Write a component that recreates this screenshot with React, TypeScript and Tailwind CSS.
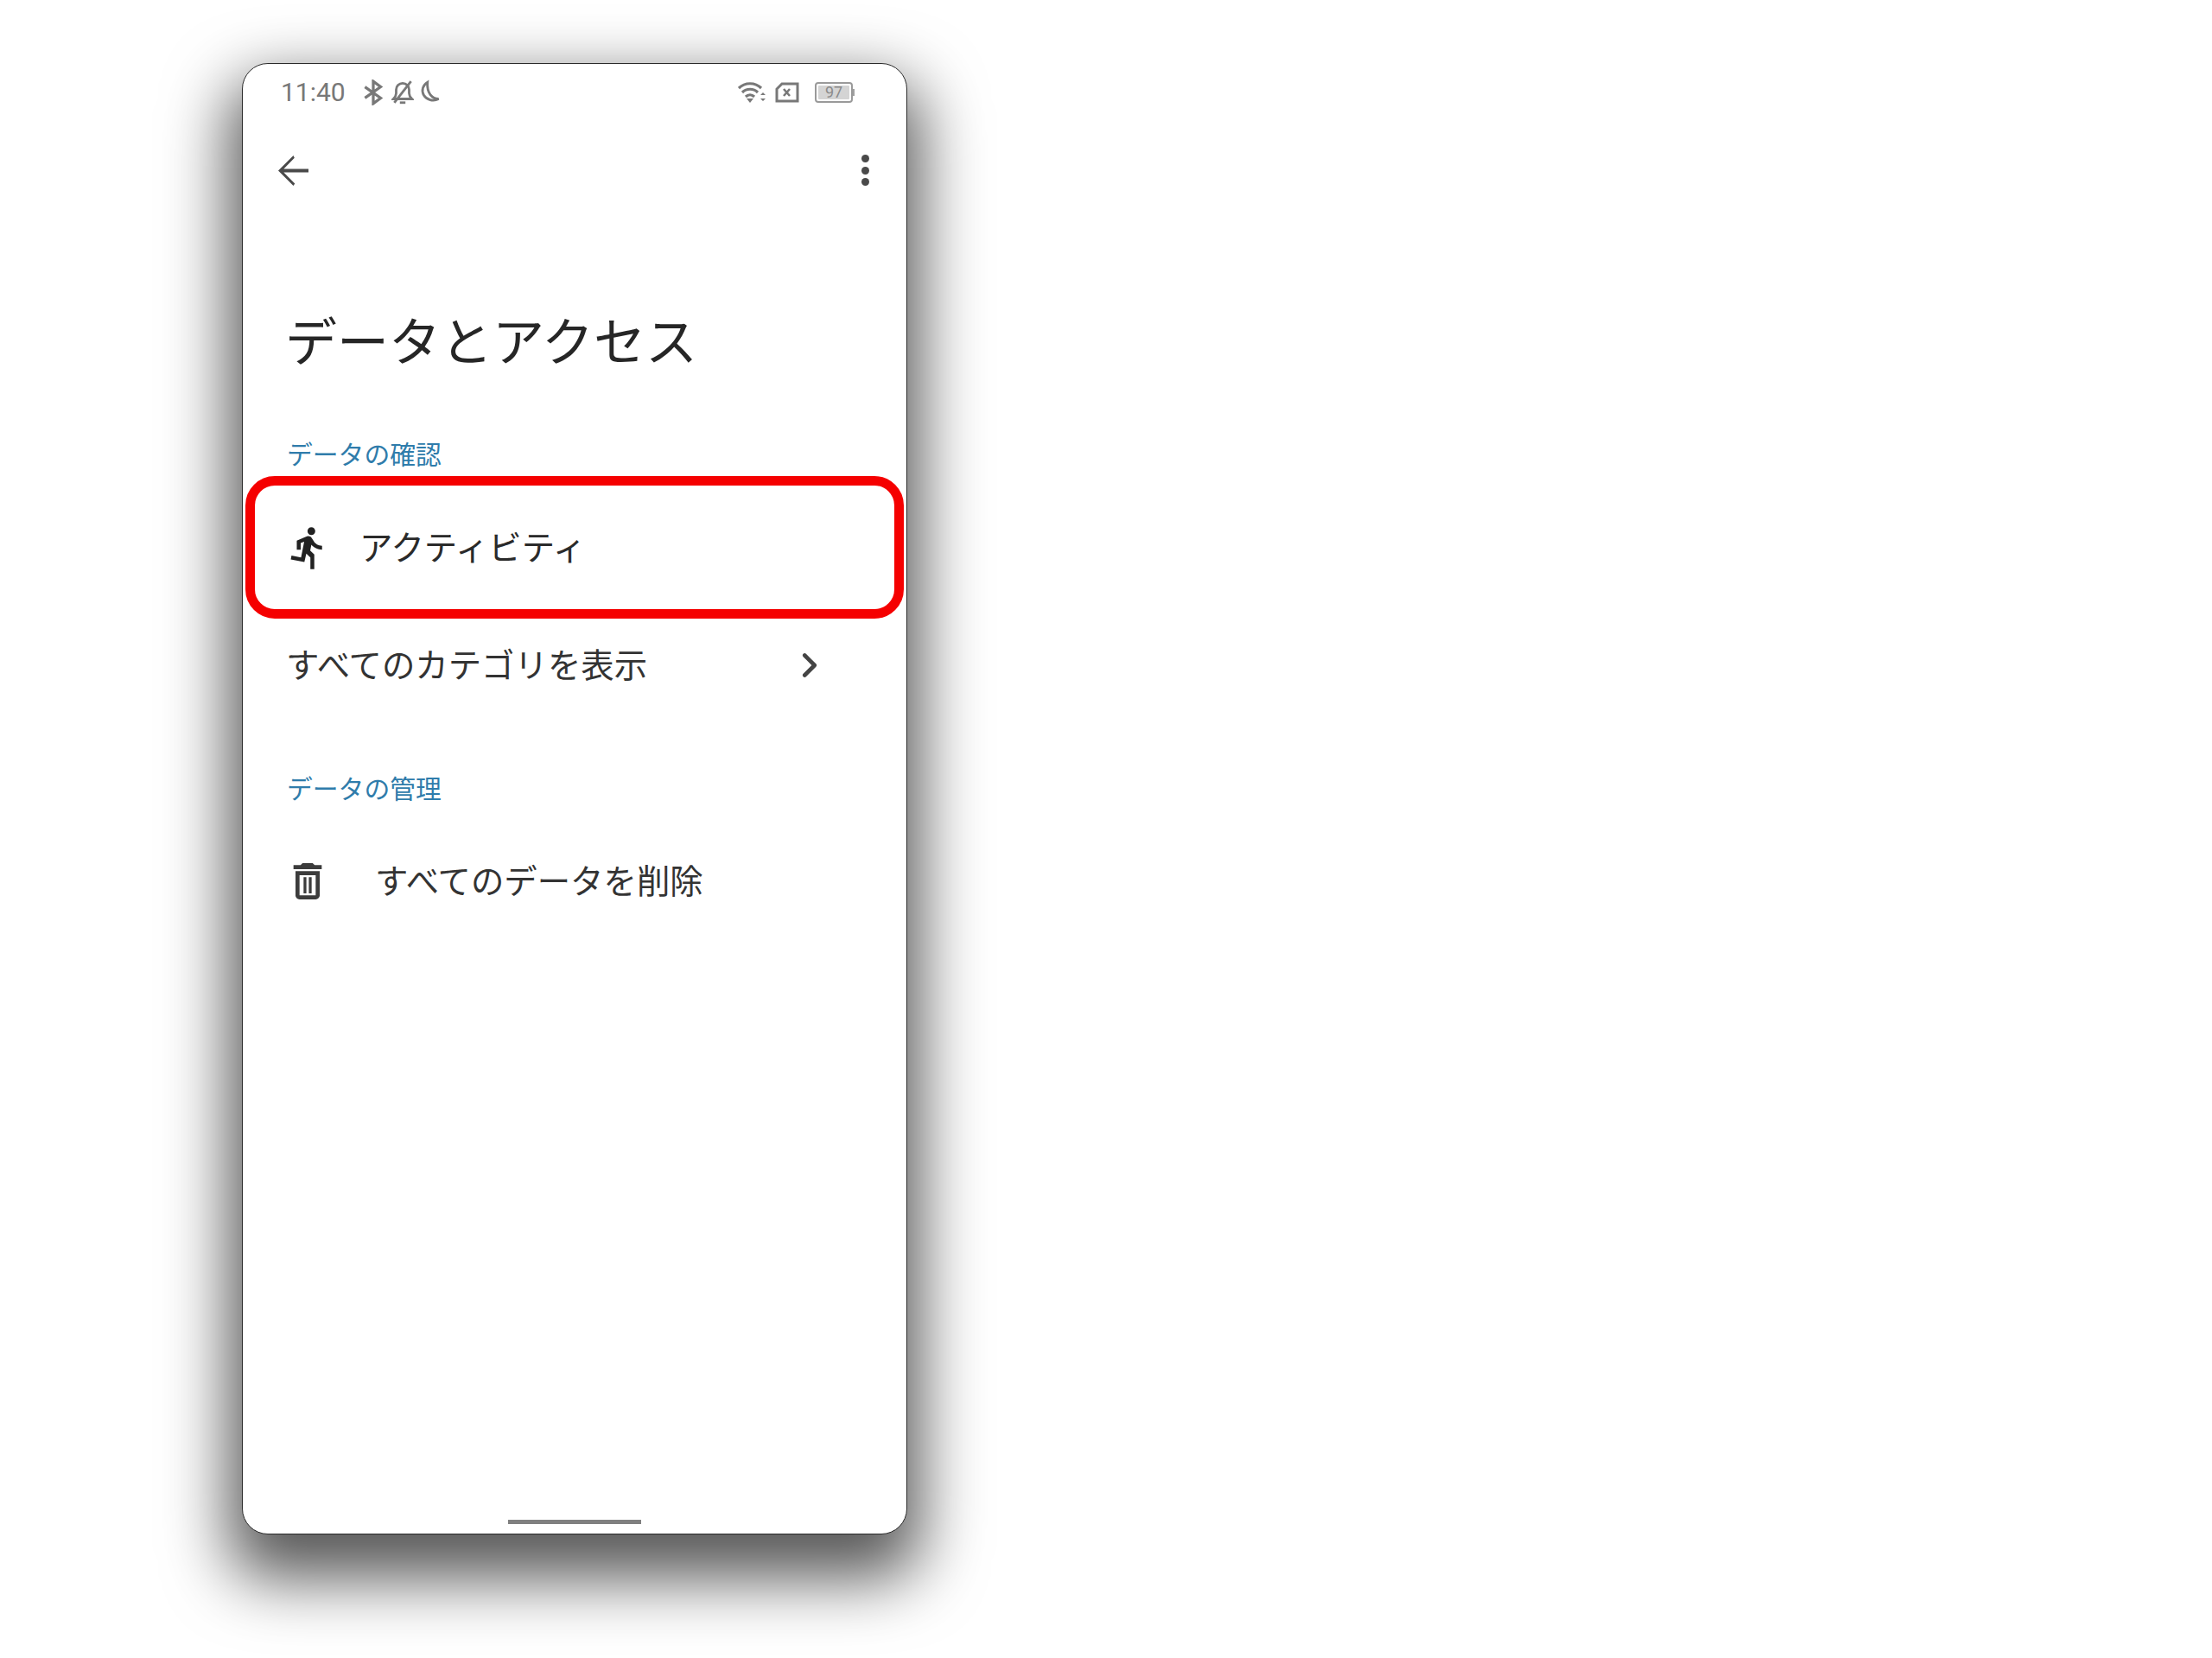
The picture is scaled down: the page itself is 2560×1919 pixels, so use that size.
import { ChevronRight } from "lucide-react"

const jp = "font-['Noto_Sans_CJK_JP','Noto_Sans',sans-serif]"

function StatusBar() {
    return (
        <div className="flex h-[65px] items-center justify-between pl-[44px] pr-[60px] text-[#787878]">
            <div className="flex items-center">
                <span className="font-['Roboto',sans-serif] text-[30px] leading-none">11:40</span>
                <svg className="ml-[20px]" width="24" height="30" viewBox="0 0 22 28" fill="none" stroke="currentColor" strokeWidth="3">
                    <path d="M2 8l17 12-8 6V2l8 6L2 20" />
                </svg>
                <svg className="ml-[9px]" width="26" height="30" viewBox="0 0 24 28" fill="none" stroke="currentColor" strokeWidth="2.6">
                    <path d="M2 21h20c-2-2-3-3-3-6v-4c0-4-3-7-7-7s-7 3-7 7v4c0 3-1 4-3 6z" />
                    <path d="M9 25h6" />
                    <path d="M3 25L21 2" />
                </svg>
                <svg className="ml-[6px]" width="26" height="30" viewBox="0 0 24 28" fill="none" stroke="currentColor" strokeWidth="2.6">
                    <path d="M9 3c-5 3-7 9-4 14s10 7 16 4c-7 0-13-6-12-18z" />
                </svg>
            </div>
            <div className="flex items-center">
                <svg width="32" height="26" viewBox="0 0 32 26" fill="none" stroke="currentColor" strokeWidth="3.2">
                    <path d="M1 8c7-7 19-7 26 0" />
                    <path d="M5 13c5-5 13-5 18 0" />
                    <path d="M9 18c3-3 7-3 10 0" />
                    <path d="M10 20l4 5 4-5z" fill="currentColor" stroke="none" />
                    <path d="M26 16l3-3 3 3zM26 20l3 3 3-3z" fill="currentColor" stroke="none" />
                </svg>
                <svg className="ml-[11px]" width="28" height="24" viewBox="0 0 28 24" fill="none" stroke="currentColor" strokeWidth="3">
                    <path d="M8 2h18v20H2V8z" />
                    <path d="M10 8l7 8M17 8l-7 8" strokeWidth="2.6" />
                </svg>
                <div className="ml-[18px] flex items-center">
                    <div className="relative h-[24px] w-[44px] rounded-[4px] border-2 border-[#9a9a9a] p-[2px]">
                        <div className="h-full w-[36px] rounded-[1px] bg-[#d4d4d4]" />
                        <span className="absolute inset-0 flex items-center justify-center font-['Roboto',sans-serif] text-[18px] leading-none text-[#8a8a8a]">97</span>
                    </div>
                    <div className="h-[8px] w-[2px] bg-[#a0a0a0]" />
                </div>
            </div>
        </div>
    )
}

function SectionLabel({ children }: { children: string }) {
    return <div className="flex h-[50px] items-center pl-[51px] text-[29.8px] leading-none text-[#2f7cab]">{children}</div>
}

export default function App() {
    return (
        <div className={`min-h-[1919px] bg-white pl-[280px] pt-[73px] ${jp}`}>
            <div className="relative flex h-[1703px] w-[770px] flex-col rounded-[30px] border border-[#2a2a2a] bg-white shadow-[0_36px_75px_15px_rgba(0,0,0,0.66)]">
                <StatusBar />

                <div className="flex h-[116px] items-center justify-between pl-[41px] pr-[43px] text-[#4a4a4a]">
                    <svg viewBox="4 4 16 16" className="h-[35px] w-[35px]" fill="currentColor">
                        <path d="M20 11.1H6.9l5.7-5.8L12 4l-8 8 8 8 .8-1.2-5.9-5.9H20z" />
                    </svg>
                    <div className="flex flex-col gap-[4.5px]">
                        <div className="h-[9px] w-[9px] rounded-full bg-[#4a4a4a]" />
                        <div className="h-[9px] w-[9px] rounded-full bg-[#4a4a4a]" />
                        <div className="h-[9px] w-[9px] rounded-full bg-[#4a4a4a]" />
                    </div>
                </div>

                <h1 className="mt-[82px] flex h-[110px] items-center pl-[49px] text-[60px] font-normal leading-none text-[#262626]">データとアクセス</h1>

                <div className="pt-[53px]">
                    <SectionLabel>データの確認</SectionLabel>
                </div>

                <div className="flex h-[162px] items-center pl-[49px] text-[#2a2a2a]">
                    <svg className="mt-[6px]" width="54" height="54" viewBox="0 0 24 24" fill="#222222">
                        <path d="M13.49 5.48c1.1 0 2-.9 2-2s-.9-2-2-2-2 .9-2 2 .9 2 2 2zm-3.6 13.9l1-4.4 2.1 2v6h2v-7.5l-2.1-2 .6-3c1.3 1.5 3.3 2.5 5.5 2.5v-2c-1.9 0-3.5-1-4.3-2.4l-1-1.6c-.4-.6-1-1-1.7-1-.3 0-.5.1-.8.1l-5.2 2.2v4.7h2v-3.4l1.8-.7-1.6 8.1-4.9-1-.4 2 7 1.4z" />
                    </svg>
                    <span className="ml-[32px] text-[38.4px] leading-none">アクティビティ</span>
                </div>

                <div className="flex h-[111px] items-center pl-[50px] text-[#333333]">
                    <span className="text-[38.4px] leading-none">すべてのカテゴリを表示</span>
                    <ChevronRight className="ml-[165px] mt-[4px] text-[#444444]" size={46} strokeWidth={2.4} />
                </div>

                <div className="pt-[64px]">
                    <SectionLabel>データの管理</SectionLabel>
                </div>

                <div className="mt-[20px] flex h-[120px] items-center pl-[47px] text-[#333333]">
                    <svg className="mt-[6px]" width="56" height="56" viewBox="0 0 24 24" fill="#3c3c3c">
                        <path d="M16 9v10H8V9h8m-1.5-6h-5l-1 1H5v2h14V4h-3.5l-1-1zM18 7H6v12c0 1.1.9 2 2 2h8c1.1 0 2-.9 2-2V7z" />
                        <path d="M10 10h1.4v8H10zM12.6 10H14v8h-1.4z" />
                    </svg>
                    <span className="ml-[50px] text-[38.4px] leading-none">すべてのデータを削除</span>
                </div>

                <div className="mt-auto flex justify-center pb-[11px]">
                    <div className="h-[5px] w-[154px] bg-[#808080]" />
                </div>

                <div className="absolute left-[3px] top-[477px] h-[165px] w-[762px] rounded-[34px] border-[11px] border-[#f50000]" />
            </div>
        </div>
    )
}
